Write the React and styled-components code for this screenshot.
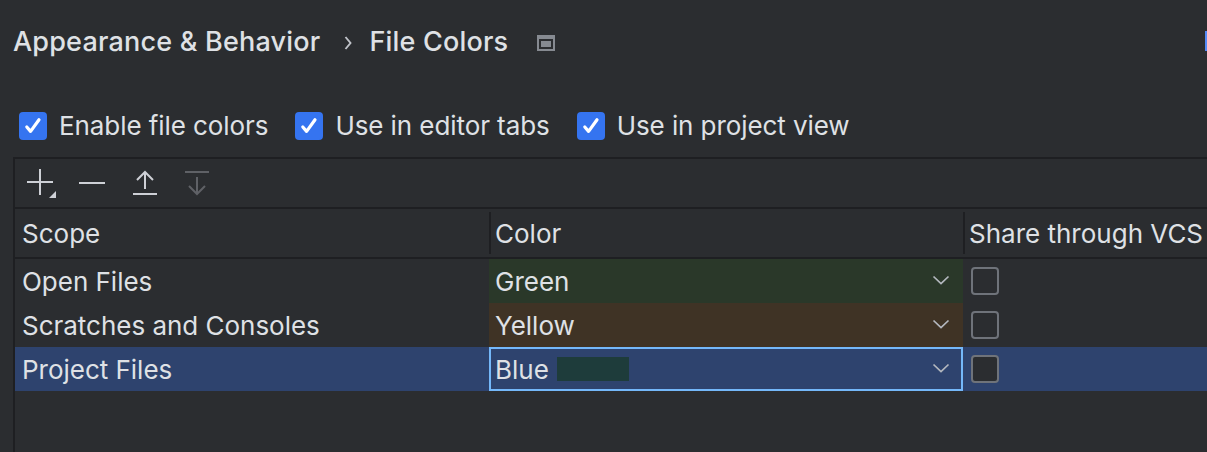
import styled, { createGlobalStyle } from "styled-components";

const GlobalStyle = createGlobalStyle`
  html, body {
    margin: 0;
    padding: 0;
    background: #2b2d30;
    overflow: hidden;
  }
`;

const Page = styled.div`
  width: 1207px;
  height: 452px;
  overflow: hidden;
  background: #2b2d30;
  color: #dfe1e5;
  font-family: Inter, "Noto Sans", sans-serif;
  font-size: 26px;
`;

const Header = styled.div`
  height: 82px;
  padding-left: 13px;
  display: flex;
  align-items: center;
  font-size: 27px;
  font-weight: 500;
  letter-spacing: 0.2px;
`;

const Chevron = styled.svg`
  margin: 3px 17px 0 24px;
`;

const Pin = styled.svg`
  margin: 3px 0 0 29px;
`;

const Accent = styled.div`
  width: 2px;
  height: 20px;
  margin-left: auto;
  background: #548af7;
`;

const Options = styled.div`
  height: 75px;
  padding: 12px 0 0 19px;
  box-sizing: border-box;
  display: flex;
  align-items: center;
  gap: 27px;
  letter-spacing: -0.08px;
`;

const Option = styled.label`
  display: flex;
  align-items: center;
  gap: 12px;
`;

const CheckBox = styled.span`
  width: 28px;
  height: 28px;
  border-radius: 4px;
  background: #3574f0;
  display: flex;
  align-items: center;
  justify-content: center;
`;

const Panel = styled.div`
  margin-left: 13px;
  height: 295px;
  border-left: 2px solid #1e1f22;
  border-top: 2px solid #1e1f22;
`;

const Toolbar = styled.div`
  height: 48px;
  padding-left: 11px;
  display: flex;
  align-items: center;
  gap: 26px;
  border-bottom: 2px solid #1e1f22;
`;

const ToolIcon = styled.svg`
  display: block;
  flex: none;
  margin-left: ${(p) => p.$shift || 0}px;
`;

const TableRow = styled.div`
  display: grid;
  grid-template-columns: 474px 474px 1fr;
  height: 44px;
  background: ${(p) => (p.$selected ? "#2e436e" : "transparent")};
`;

const HeadRow = styled(TableRow)`
  height: 48px;
  border-bottom: 2px solid #1e1f22;
`;

const HeadCell = styled.div`
  display: flex;
  align-items: center;
  padding-left: ${(p) => (p.$first ? "7px" : "6px")};
  position: relative;
  white-space: nowrap;
  overflow: hidden;
  ${(p) =>
    !p.$first &&
    `
    &::before {
      content: "";
      position: absolute;
      left: 0;
      top: 3px;
      bottom: 3px;
      width: 2px;
      background: #1e1f22;
    }
  `}
`;

const NameCell = styled.div`
  display: flex;
  align-items: center;
  padding-left: 7px;
  letter-spacing: -0.02px;
`;

const ColorCell = styled.div`
  display: flex;
  align-items: center;
  padding: 0 13px 0 6px;
  background: ${(p) => p.$bg || "transparent"};
  box-shadow: ${(p) => (p.$focus ? "inset 0 0 0 2px #74b8fa" : "none")};
`;

const Swatch = styled.span`
  width: 72px;
  height: 24px;
  margin-left: 8px;
  background: #1e3c3b;
`;

const Arrow = styled.svg`
  margin-left: auto;
  margin-top: -2px;
`;

const ShareCell = styled.div`
  display: flex;
  align-items: center;
  padding-left: 8px;
`;

const EmptyBox = styled.span`
  width: 24px;
  height: 24px;
  border: 2px solid #6f737a;
  border-radius: 4px;
  background: #2b2d30;
  margin-top: -1px;
`;

const rows = [
  { name: "Open Files", color: "Green", bg: "#2a3829" },
  { name: "Scratches and Consoles", color: "Yellow", bg: "#3f3325" },
  { name: "Project Files", color: "Blue", selected: true },
];

const options = ["Enable file colors", "Use in editor tabs", "Use in project view"];

function Tick() {
  return (
    <svg width="20" height="18" viewBox="0 0 20 18" fill="none">
      <path d="M3.8 10 L7.6 14.4 L16 2.8" stroke="#fff" strokeWidth="3.2" strokeLinecap="round" strokeLinejoin="round" />
    </svg>
  );
}

function App() {
  return (
    <Page>
      <GlobalStyle />
      <Header>
        <span>Appearance &amp; Behavior</span>
        <Chevron width="8" height="14" viewBox="0 0 8 14" fill="none">
          <path d="M1.5 1 L6.5 7 L1.5 13" stroke="#c0c3c9" strokeWidth="1.9" />
        </Chevron>
        <span>File Colors</span>
        <Pin width="18" height="16" viewBox="0 0 18 16">
          <path fill="#868a91" fillRule="evenodd" d="M0 0H18V16H0Z M2 4V14H16V4Z" />
          <rect x="4" y="6" width="10" height="6" fill="#868a91" />
        </Pin>
        <Accent />
      </Header>

      <Options>
        {options.map((label) => (
          <Option key={label}>
            <CheckBox>
              <Tick />
            </CheckBox>
            {label}
          </Option>
        ))}
      </Options>

      <Panel>
        <Toolbar>
          <ToolIcon width="30" height="30" viewBox="0 0 30 30" fill="none">
            <path d="M1 14 H27 M14 1 V27" stroke="#ced0d6" strokeWidth="2" />
            <path d="M23 30 L30 30 L30 23 Z" fill="#ced0d6" />
          </ToolIcon>
          <ToolIcon $shift={-3} width="26" height="4" viewBox="0 0 26 4">
            <path d="M0 2 H26" stroke="#ced0d6" strokeWidth="2" />
          </ToolIcon>
          <ToolIcon $shift={1} width="26" height="26" viewBox="0 0 26 26" fill="none">
            <path d="M1 24 H25 M13 19 V2 M5 10 L13 2 L21 10" stroke="#ced0d6" strokeWidth="2" />
          </ToolIcon>
          <ToolIcon width="26" height="26" viewBox="0 0 26 26" fill="none">
            <path d="M1 2 H25 M13 7 V24 M5 16 L13 24 L21 16" stroke="#5f6166" strokeWidth="2" />
          </ToolIcon>
        </Toolbar>

        <HeadRow>
          <HeadCell $first>Scope</HeadCell>
          <HeadCell>Color</HeadCell>
          <HeadCell>Share through VCS</HeadCell>
        </HeadRow>

        {rows.map((row) => (
          <TableRow key={row.name} $selected={row.selected}>
            <NameCell>{row.name}</NameCell>
            <ColorCell $bg={row.bg} $focus={row.selected}>
              {row.color}
              {row.selected && <Swatch />}
              <Arrow width="18" height="10" viewBox="0 0 18 10" fill="none">
                <path d="M1.5 1.5 L9 8.5 L16.5 1.5" stroke="#b4b8bf" strokeWidth="1.7" />
              </Arrow>
            </ColorCell>
            <ShareCell>
              <EmptyBox />
            </ShareCell>
          </TableRow>
        ))}
      </Panel>
    </Page>
  );
}

export default App;
